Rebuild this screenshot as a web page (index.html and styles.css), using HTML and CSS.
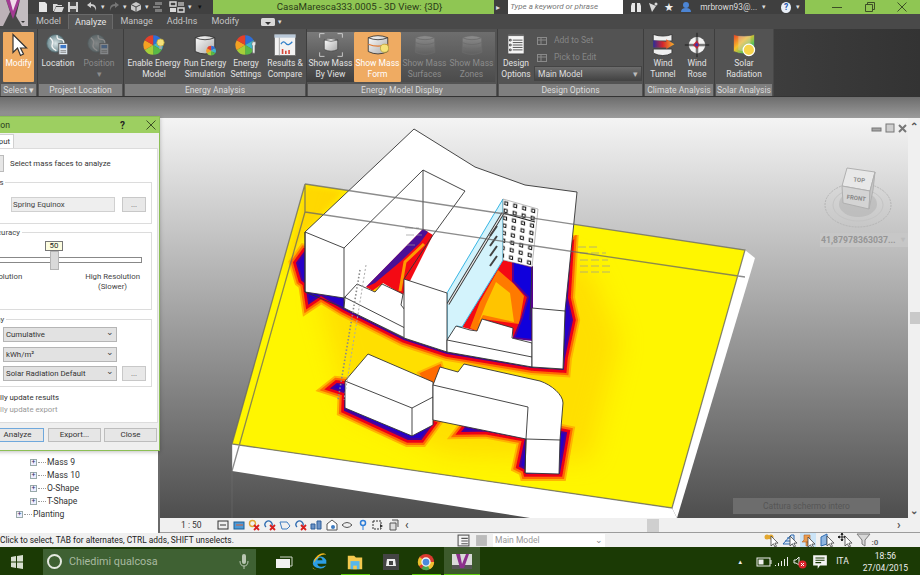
FILE: index.html
```html
<!DOCTYPE html>
<html lang="en">
<head>
<meta charset="utf-8">
<title>CasaMaresca333.0005 - 3D View: {3D}</title>
<link rel="stylesheet" href="styles.css">
</head>
<body>
<svg class="defs" width="0" height="0" aria-hidden="true">
  <defs>
    <linearGradient id="gMass" x1="0" y1="0" x2="1" y2="1"><stop offset="0" stop-color="#fff"/><stop offset="1" stop-color="#a9a9a9"/></linearGradient>
    <linearGradient id="gMassDim" x1="0" y1="0" x2="0" y2="1"><stop offset="0" stop-color="#8e8e8e"/><stop offset="1" stop-color="#5f5f5f"/></linearGradient>
    <linearGradient id="gSolar" x1="0" y1="0" x2="1" y2="1"><stop offset="0" stop-color="#e63a28"/><stop offset=".4" stop-color="#f6c12b"/><stop offset=".7" stop-color="#5cc25a"/><stop offset="1" stop-color="#2f6ed8"/></linearGradient>
    <linearGradient id="gTunnel" x1="0" y1="0" x2="1" y2="0"><stop offset="0" stop-color="#2b2b9a"/><stop offset=".45" stop-color="#d6262a"/><stop offset="1" stop-color="#f7b52c"/></linearGradient>
    <radialGradient id="gGlobe"><stop offset="0" stop-color="#d9e4e6"/><stop offset="1" stop-color="#6d8a90"/></radialGradient>
    <symbol id="pie" viewBox="0 0 32 32">
      <path d="M15 16V4A12 12 0 0 1 25.4 10Z" fill="#2f6ed8"/>
      <path d="M15 16L25.4 10A12 12 0 0 1 25.4 22Z" fill="#3fb6c9"/>
      <path d="M15 16L25.4 22A12 12 0 0 1 15 28Z" fill="#58b947"/>
      <path d="M15 16V28A12 12 0 0 1 4.6 22Z" fill="#a6cf3a"/>
      <path d="M15 16L4.6 22A12 12 0 0 1 4.6 10Z" fill="#f4a122"/>
      <path d="M15 16L4.6 10A12 12 0 0 1 15 4Z" fill="#e4402a"/>
    </symbol>
    <symbol id="mass" viewBox="0 0 32 32">
      <path d="M4 7Q16 2 28 7V24Q16 30 4 24Z" fill="url(#gMass)" stroke="#2c2c2c"/>
      <path d="M4 7Q16 12 28 7" fill="none" stroke="#2c2c2c"/>
    </symbol>
    <symbol id="massdim" viewBox="0 0 32 32">
      <path d="M4 7Q16 2 28 7V25Q16 30 4 25Z" fill="url(#gMassDim)" stroke="#6b6b6b"/>
      <path d="M4 7Q16 12 28 7M4 13Q16 18 28 13M4 19Q16 24 28 19" fill="none" stroke="#6b6b6b"/>
    </symbol>
    <symbol id="globe" viewBox="0 0 32 32">
      <circle cx="13" cy="14" r="11" fill="url(#gGlobe)" stroke="#4e5f63"/>
      <path d="M6 7Q11 11 9 15T14 23M15 4Q14 9 19 9T23 15" fill="none" stroke="#f4f4f4" stroke-width="1.6"/>
      <rect x="17" y="14" width="11" height="14" fill="#dfe7ee" stroke="#555"/>
      <rect x="19" y="16" width="7" height="4" fill="#3c78c8"/>
      <path d="M19 23h7M19 25h7" stroke="#777"/>
    </symbol>
    <symbol id="sm" viewBox="0 0 12 12">
      <rect x="1.5" y="2.5" width="9" height="7" fill="none" stroke="#8a8a8a"/>
      <path d="M1.5 5h9M5 2.500v7" stroke="#8a8a8a"/>
    </symbol>
    <symbol id="redx" viewBox="0 0 12 12">
      <circle cx="4.5" cy="4.5" r="3" fill="none" stroke="#e3a72f" stroke-width="1.4"/>
      <path d="M6 6l5 5M11 6l-5 5" stroke="#d81f1f" stroke-width="1.8"/>
    </symbol>
    <symbol id="bluex" viewBox="0 0 12 12">
      <path d="M2 8a3.5 3.5 0 1 1 5 0" fill="none" stroke="#2f6bb0" stroke-width="1.3"/>
      <path d="M6 6l5 5M11 6l-5 5" stroke="#d81f1f" stroke-width="1.8"/>
    </symbol>
    <symbol id="cur" viewBox="0 0 16 16">
      <path d="M8 4v10l2.4-2.2L12 15l1.5-.7-1.6-3.2H15Z" fill="#fff" stroke="#444" stroke-width=".8"/>
    </symbol>
    <clipPath id="plateClip"><polygon points="305,184 745,250 672,508 232,444"/></clipPath>
    <pattern id="facade" width="9" height="7.4" patternUnits="userSpaceOnUse" patternTransform="matrix(1 .27 -.08 1 503 199)">
      <rect width="9" height="7.4" fill="#fff"/>
      <rect x="2" y="2" width="3" height="3" fill="#fff" stroke="#111"/>
    </pattern>
    <filter id="blur" x="-20%" y="-20%" width="140%" height="140%"><feGaussianBlur stdDeviation="12"/></filter>
    <filter id="soft"><feGaussianBlur stdDeviation="3"/></filter>
    <filter id="edge" x="-5%" y="-5%" width="110%" height="110%"><feGaussianBlur stdDeviation=".6"/></filter>
    <polygon id="haloA" points="305,252 297,263 302,280 306,283 309,303 321,295 344,309 404,339 447,353 532,367 563,369 564,358 572,320 567,298 570,247 500,300"/>
    <polygon id="haloB" points="332,388 337,384 346,385 345,410 408,439 421,439 432,424 400,410"/>
    <polygon id="haloC" points="463,431 466,427 526,438 520,466 526,469 527,473 559,473 566,433 561,432 540,430"/>
    <polygon id="haloD" points="431,381 428,376 437,372 440,382"/>
  </defs>
</svg>

<header class="titlebar">
  <div class="qat">
    <div class="appbtn"><svg class="appicon" viewBox="0 0 28 26"><path d="M6 0L13 19 20 0Z" fill="#a33a93"/><path d="M10 0L13 11 17 0Z" fill="#f1dcea"/><path d="M0 0H6L10 12 3 26H0Z" fill="#bdb2b8"/><path d="M20 0H28V26H22L16 16Z" fill="#c3bcc0"/><path d="M21 21l4 0-2 2z" fill="#333"/></svg></div>
    <div class="qatitems">
      <svg class="qi" viewBox="0 0 12 12"><path d="M2 1h6l2 2v8H2Z" fill="#e6e6e6"/></svg>
      <svg class="qi" viewBox="0 0 12 12"><path d="M1 3h4l1 1h4v1H4L2 10H1ZM4 6h8l-2 5H2Z" fill="#d8d8d8"/></svg>
      <svg class="qi" viewBox="0 0 12 12"><path d="M1 1h10v10H1Z" fill="#d2d2d2"/><path d="M3 1h6v4H3ZM3 8h6v3H3Z" fill="#4d4d4d"/></svg>
      <svg class="qi mleft" viewBox="0 0 12 12"><path d="M5 1L1 4l4 3V5q4 0 5 5 1-7-5-7Z" fill="#cfcfcf"/></svg>
      <span class="caret">▾</span>
      <svg class="qi" viewBox="0 0 12 12"><path d="M7 1l4 3-4 3V5q-4 0-5 5-1-7 5-7Z" fill="#767676"/></svg>
      <span class="caret">▾</span>
      <svg class="qi" viewBox="0 0 12 12"><path d="M6 1l5 2.5v5L6 11 1 8.500v-5Z" fill="#c8c8c8"/><path d="M1 3.500L6 6l5-2.500M6 6v5" stroke="#444" fill="none"/></svg>
      <span class="caret">▾</span>
      <svg class="qi" viewBox="0 0 12 12"><path d="M3 1h7v3H3ZM1 5h7v2H1ZM3 8h7v3H3Z" fill="#7b7b7b"/></svg>
      <svg class="qi wide" viewBox="0 0 16 12"><path d="M1 1h6v4H1ZM9 7h6v4H9Z" fill="none" stroke="#d9d9d9" stroke-width="1.400"/><path d="M1 7h6v4H1Z" fill="#d9d9d9"/><path d="M9 1h6v4H9Z" fill="#9a9a9a"/></svg>
      <span class="caret">▾</span>
      <span class="caret dark">▾</span>
    </div>
  </div>
  <div class="doctitle">CasaMaresca333.0005 - 3D View: {3D}</div>
  <div class="infocenter">
    <span class="arrow">▸</span>
    <span class="search">Type a keyword or phrase</span>
    <svg class="qi" viewBox="0 0 12 12"><path d="M2 2h3v9H1V5ZM10 2H7v9h4V5Z" fill="#e6e6e6"/></svg>
    <svg class="qi" viewBox="0 0 12 12"><path d="M2 2l7 3-4 6Z" fill="#d8d8d8"/><circle cx="9" cy="3" r="1.500" fill="#d8d8d8"/></svg>
    <span class="star">★</span>
    <svg class="qi" viewBox="0 0 12 12"><circle cx="6" cy="4" r="3" fill="#4c85d4"/><path d="M1 11q0-4 5-4t5 4Z" fill="#4c85d4"/></svg>
    <span class="user">mrbrown93@...</span>
    <span class="caret">▾</span>
    <span class="help">?</span>
    <span class="caret">▾</span>
  </div>
  <div class="winctl">
    <svg class="wc" viewBox="0 0 10 10"><path d="M0 5.500h10" stroke="#3d4f26" fill="none"/></svg>
    <svg class="wc" viewBox="0 0 10 10"><path d="M.5 2.500h7v7h-7ZM2.500 2.500v-2h7v7h-2" stroke="#3d4f26" fill="none"/></svg>
    <svg class="wc" viewBox="0 0 10 10"><path d="M.5.500l9 9M9.500.500l-9 9" stroke="#3d4f26" fill="none"/></svg>
  </div>
</header>

<nav class="tabs">
  <span class="tab">Model</span>
  <span class="tab active">Analyze</span>
  <span class="tab">Manage</span>
  <span class="tab">Add-Ins</span>
  <span class="tab">Modify</span>
  <span class="tab tabicon"><svg class="tabcam" viewBox="0 0 14 8"><rect width="14" height="8" rx="1.500" fill="#d8d8d8"/><path d="M4 4h6l-3 3Z" fill="#333"/></svg><span class="caret">▾</span></span>
</nav>

<section class="ribbon">
  <div class="panel p-select">
    <div class="pbody"><div class="tool w-modify on">
      <div class="ic"><svg class="i24" viewBox="0 0 16 16"><path d="M4 1v12l3-3 2 5 2-1-2-4h4Z" fill="#fff" stroke="#333" stroke-width=".8"/></svg></div>
      <span>Modify</span></div></div>
    <div class="pfoot">Select ▾</div>
  </div>
  <div class="panel p-loc">
    <div class="pbody">
      <div class="tool w-40"><div class="ic"><svg class="i30" viewBox="0 0 32 32"><use href="#globe"/></svg></div><span>Location</span></div>
      <div class="tool w-42 off"><div class="ic"><svg class="i30 dim" viewBox="0 0 32 32"><use href="#globe"/></svg></div><span>Position<br>▾</span></div>
    </div>
    <div class="pfoot">Project Location</div>
  </div>
  <div class="panel p-energy">
    <div class="pbody">
      <div class="tool w-60"><div class="ic"><svg class="i30" viewBox="0 0 32 32"><use href="#pie"/><circle cx="24" cy="13" r="4.500" fill="#f6e27a" stroke="#b9a53a"/><rect x="22.500" y="17" width="3" height="4" fill="#aaa"/></svg></div><span>Enable Energy<br>Model</span></div>
      <div class="tool w-42"><div class="ic"><svg class="i30" viewBox="0 0 32 32"><use href="#mass"/><svg x="16" y="15" width="16" height="16" viewBox="0 0 32 32"><use href="#pie"/></svg></svg></div><span>Run Energy<br>Simulation</span></div>
      <div class="tool w-40"><div class="ic"><svg class="i30" viewBox="0 0 32 32"><use href="#pie"/><path d="M24 12l4 0v3l-1 2v9h-3v-9l-1-2Z" fill="#e8e8e8" stroke="#555" stroke-width=".6"/></svg></div><span>Energy<br>Settings</span></div>
      <div class="tool w-38"><div class="ic"><svg class="i30" viewBox="0 0 32 32"><rect x="3" y="3" width="26" height="26" fill="#f2f2f2" stroke="#666"/><rect x="3" y="3" width="26" height="4" fill="#b9c8d8"/><path d="M9 7v22" stroke="#999"/><path d="M11 15q3-5 6-1t8-2" fill="none" stroke="#2f7ec8" stroke-width="1.500"/><path d="M12 27v-6h2v6ZM16 27v-4h2v4ZM20 27v-5h2v5Z" fill="#d9483a"/></svg></div><span>Results &amp;<br>Compare</span></div>
    </div>
    <div class="pfoot">Energy Analysis</div>
  </div>
  <div class="panel p-display">
    <div class="pbody">
      <div class="tool w-47 grad"><div class="ic"><svg class="i30" viewBox="0 0 32 32"><path d="M2 7V2h6M30 7V2h-6M2 25v5h6M30 25v5h-6" fill="none" stroke="#ddd"/><use href="#mass" x="5" y="5" width="22" height="22"/></svg></div><span>Show Mass<br>By View</span></div>
      <div class="tool w-47 on"><div class="ic"><svg class="i30" viewBox="0 0 32 32"><use href="#mass"/><path d="M4 15Q16 20 28 15" fill="none" stroke="#e2792f" stroke-width="1.500"/><circle cx="24" cy="20" r="5" fill="#f6e27a" stroke="#b9a53a"/></svg></div><span>Show Mass<br>Form</span></div>
      <div class="tool w-47 grad off"><div class="ic"><svg class="i30" viewBox="0 0 32 32"><use href="#massdim"/></svg></div><span>Show Mass<br>Surfaces</span></div>
      <div class="tool w-47 grad off"><div class="ic"><svg class="i30" viewBox="0 0 32 32"><use href="#massdim"/></svg></div><span>Show Mass<br>Zones</span></div>
    </div>
    <div class="pfoot">Energy Model Display</div>
  </div>
  <div class="panel p-design">
    <div class="pbody">
      <div class="tool w-36"><div class="ic"><svg class="i30" viewBox="0 0 32 32"><rect x="6" y="3" width="20" height="24" fill="#f5f5f5" stroke="#444"/><rect x="6" y="3" width="20" height="2" fill="#6c6c6c"/><path d="M8 9h2v2H8ZM8 15h2v2H8ZM8 21h2v2H8Z" fill="none" stroke="#333"/><path d="M12 10h12M12 13h12M12 16h12M12 19h12M12 22h12" stroke="#333"/></svg></div><span>Design<br>Options</span></div>
      <div class="dstack">
        <div class="ditem"><svg class="i12" viewBox="0 0 12 12"><use href="#sm"/></svg><span>Add to Set</span></div>
        <div class="ditem"><svg class="i12" viewBox="0 0 12 12"><use href="#sm"/></svg><span>Pick to Edit</span></div>
        <div class="dselect"><span>Main Model</span><span class="dcaret">▾</span></div>
      </div>
    </div>
    <div class="pfoot">Design Options</div>
  </div>
  <div class="panel p-climate">
    <div class="pbody">
      <div class="tool w-38"><div class="ic"><svg class="i30" viewBox="0 0 32 32"><path d="M4 3Q16 7 27 3V11H4ZM4 21H27V26Q16 32 4 26Z" fill="#efefef" stroke="#333"/><path d="M4 10L20 12V9L30 15 20 21V19L4 19Z" fill="url(#gTunnel)"/></svg></div><span>Wind<br>Tunnel</span></div>
      <div class="tool w-30"><div class="ic"><svg class="i30" viewBox="0 0 32 32"><circle cx="16" cy="16" r="10" fill="#f4f4f4"/><path d="M6 16h20M16 6v20" stroke="#bdbdbd" stroke-width="4"/><path d="M16 1v30M1 16h30" stroke="#111"/><path d="M16 10l3 6-3 5-5-5Z" fill="#c72634"/><path d="M16 13l2 3-2 2-3-2Z" fill="#4232a8"/></svg></div><span>Wind<br>Rose</span></div>
    </div>
    <div class="pfoot">Climate Analysis</div>
  </div>
  <div class="panel p-solar">
    <div class="pbody">
      <div class="tool w-58"><div class="ic"><svg class="i30" viewBox="0 0 32 32"><path d="M3 3Q16 7 29 3V24Q16 30 3 24Z" fill="url(#gSolar)" stroke="#555"/><path d="M9 5V22Q16 25 24 22V5" fill="#d9d9d9" opacity=".35"/><circle cx="22" cy="22" r="7" fill="#f7d54a" stroke="#fff" stroke-width="1.500"/></svg></div><span>Solar<br>Radiation</span></div>
    </div>
    <div class="pfoot">Solar Analysis</div>
  </div>
</section>

<div class="band"></div>

<main class="workspace">
  <aside class="browser">
    <ul class="tree">
      <li class="node l2"><span class="plus">+</span><span class="dash"></span>Mass 9</li>
      <li class="node l2"><span class="plus">+</span><span class="dash"></span>Mass 10</li>
      <li class="node l2"><span class="plus">+</span><span class="dash"></span>O-Shape</li>
      <li class="node l2"><span class="plus">+</span><span class="dash"></span>T-Shape</li>
      <li class="node l1"><span class="plus">+</span><span class="dash"></span>Planting</li>
    </ul>
  </aside>
  <div class="viewcol">
    <div class="viewrow">
      <div class="canvas">
        <svg class="scene" viewBox="160 118 748 400" width="748" height="400" role="img" aria-label="3D model with solar radiation analysis">
          <polygon class="side" points="232,444 672,508 677,518 530,518 232,471"/>
          <polygon class="side" points="745,250 672,508 677,518 755,258"/>
          <polygon class="plate" points="305,184 745,250 672,508 232,444"/>
          <g clip-path="url(#plateClip)">
            <polygon class="glow" points="345,195 430,200 590,270 620,340 590,460 450,455 350,410 320,300"/>
            <polygon class="glowedge" points="305,184 345,190 305,235 282,280 298,215"/>
          </g>
          <g class="halo">
            <use href="#haloA" class="h1"/><use href="#haloA" class="h2"/><use href="#haloA" class="h3"/><use href="#haloA" class="h4"/>
            <use href="#haloB" class="h1"/><use href="#haloB" class="h2"/><use href="#haloB" class="h3"/><use href="#haloB" class="h4"/>
            <use href="#haloC" class="h1"/><use href="#haloC" class="h2"/><use href="#haloC" class="h3"/><use href="#haloC" class="h4"/>
            <use href="#haloD" class="h1"/><use href="#haloD" class="h2"/>
          </g>

          <polygon class="mass" points="305,232 414,129 475,167 525,185 577,192 565,311 563,369 532,367 447,352 404,338 344,308 344,298 305,292"/>
          <polygon class="court-red" points="423,229 433,235 403,295 383,283 375,292 366,287"/>
          <polygon class="court-purple" points="423,229 428,232 420,243 400,262 375,283 366,287"/>
          <polyline class="court-stripe" points="424,244 405,262 400,291"/>
          <polygon class="court-gold" points="372,291 379,286 383,283 376,294"/>

          <polygon class="court-red" points="503,260 532,267 532,340 513,338 512,328 482,319 477,331 462,327"/>
          <polygon class="court-orange" points="498,270 514,284 524,296 519,324 482,319 477,331 470,328 480,302"/>
          <polygon class="court-gold" points="496,282 510,293 514,322 483,315 478,324 486,304"/>
          <polygon class="court-blue" points="513,261 532,267 532,340 514,338 522,318 528,297 513,281"/>

          <polygon class="wall" points="447,293 503,199 503,260 462,327 457,326 447,340"/>
          <polygon class="grid" points="503,199 538,209 532,267 503,260"/>
          <path class="fline" d="M503,213 535,222"/>
          <polyline class="rail" points="448,304 503,213"/>
          <polyline class="railin" points="448,304 503,213"/>
          <path class="balc" d="M497,226l-7 10M497,236l-7 10M497,246l-7 10M497,256l-7 10"/>

          <polygon class="mass" points="345,297 357,284 375,292 382,284 403,294 401,305 405,310 405,338 344,308"/>
          <path class="edge" d="M344,297 405,328"/>
          <polygon class="mass" points="404,279 447,293 447,352 404,338"/>
          <polygon class="mass" points="447,340 456,326 470,330 477,331 482,319 513,328 512,338 532,343 532,367 447,352"/>
          <path class="edge" d="M447,340 532,357"/>
          <polygon class="mass" points="532,308 565,311 563,369 532,367"/>
          <path class="edge" d="M305,232 344,248 V298 M344,248 423,170 465,191 433,235 404,279 M423,170 V229 M532,267 530,320 M305,232 V292 L344,308"/>

          <polygon class="mass" points="345,381 368,354 433,382 433,425 412,436 345,408"/>
          <path class="edge" d="M345,381 412,408 V436 M412,408 433,397"/>
          <path class="mass" d="M433,385 440,367 458,372 464,364 540,381C552,385 563,395 563,403L560,440 559,474 525,473 526,439 433,420Z"/>
          <path class="edge" d="M433,385 528,407 526,439 560,440 M526,439 525,473"/>

          <path class="tick" d="M360,270 338,400"/>
          <path class="tickb" d="M366,265 344,400"/>
          <path class="marks" d="M578,247h22M580,253h26M580,260h28M580,266h30M580,272h30M405,228h14M406,235h16M407,245h8"/>
          <path class="wire" d="M305,184 745,250 672,508 232,444 305,184 M305,212 745,277 M305,212 232,471 M305,184 V212"/>
          <path class="wireb" d="M232,444 V471 530,518"/>

          <g class="cube">
            <ellipse cx="858" cy="205" rx="33" ry="22" fill="none" stroke="#b5b5b5" stroke-dasharray="2 1"/>
            <ellipse cx="858" cy="205" rx="25" ry="16" fill="none" stroke="#c4c4c4"/>
            <ellipse cx="858" cy="204" rx="19" ry="13" fill="#b0b0b0" opacity=".5"/>
            <polygon points="847,168 875,172 870,191 842,186" fill="#e8e8e8" stroke="#b0b0b0"/>
            <polygon points="842,186 870,191 869,209 843,203" fill="#d4d4d4" stroke="#b0b0b0"/>
            <polygon points="875,172 870,191 869,209 873,190" fill="#c6c6c6" stroke="#b0b0b0"/>
            <text x="859" y="182" class="cubet" transform="rotate(6 859 182)">TOP</text>
            <text x="856" y="200" class="cubet" transform="rotate(8 856 200)">FRONT</text>
          </g>
          <g class="winicons">
            <rect x="872" y="128" width="9" height="3" fill="#a5a5a5" stroke="#777"/>
            <rect x="886" y="124" width="8" height="8" fill="#cfcfcf" stroke="#777"/>
            <path d="M899 125l7 7M906 125l-7 7" stroke="#777" stroke-width="2"/>
          </g>
        </svg>
        <div class="chip"><span>41,87978363037...</span><span class="chipcaret">▾</span></div>
        <div class="toast">Cattura schermo intero</div>
      </div>
      <div class="vscroll">
        <span class="sarrow">⌃</span>
        <div class="vthumb"></div>
        <span class="sarrow down">⌄</span>
      </div>
    </div>
    <div class="viewbar">
      <span class="scale">1 : 50</span>
      <div class="vbicons">
        <svg class="i12" viewBox="0 0 12 12"><rect x="1" y="2" width="10" height="8" fill="#eee" stroke="#333"/><path d="M3 6h6" stroke="#333"/></svg>
        <svg class="i12" viewBox="0 0 12 12"><rect x="1" y="3" width="10" height="7" fill="#4d9ad6" stroke="#1e5e94"/><path d="M3 6h7" stroke="#e35d2f"/></svg>
        <svg class="i12" viewBox="0 0 12 12"><use href="#redx"/></svg>
        <svg class="i12" viewBox="0 0 12 12"><use href="#bluex"/></svg>
        <svg class="i12" viewBox="0 0 12 12"><path d="M1 3h7l3 4-3 3H3Z" fill="none" stroke="#3f7cc0"/></svg>
        <svg class="i12" viewBox="0 0 12 12"><use href="#bluex"/></svg>
        <svg class="i12" viewBox="0 0 12 12"><path d="M1 10V5h4v5ZM7 10V2h4v8Z" fill="#6d93c6" stroke="#2f5f9a"/></svg>
        <svg class="i12" viewBox="0 0 12 12"><path d="M6 1l5 4v6H1V5Z" fill="#fff" stroke="#555"/><circle cx="7" cy="8" r="2" fill="#3f7cc0"/></svg>
        <svg class="i12" viewBox="0 0 12 12"><path d="M1 6q5-5 10 0-5 5-10 0Z" fill="none" stroke="#555"/></svg>
        <svg class="i12" viewBox="0 0 12 12"><circle cx="6" cy="4" r="2.500" fill="none" stroke="#2f7ed8" stroke-width="1.500"/><path d="M6 7v4" stroke="#2f7ed8"/></svg>
        <svg class="i12" viewBox="0 0 12 12"><rect x="1" y="2" width="8" height="8" fill="none" stroke="#333" stroke-dasharray="2 1"/><path d="M8 5l3 2-3 2Z" fill="#333"/></svg>
        <svg class="i12" viewBox="0 0 12 12"><path d="M2 4h6v7H2ZM4 1h6v7" fill="#ddd" stroke="#555"/></svg>
        <span class="chev">‹</span>
      </div>
      <div class="hscroll"><div class="hthumb"></div></div>
      <span class="chevr">›</span>
      <span class="grip"></span>
    </div>
  </div>
</main>

<footer class="statusbar">
  <span class="stext">Click to select, TAB for alternates, CTRL adds, SHIFT unselects.</span>
  <div class="sleft">
    <svg class="i13" viewBox="0 0 12 12"><rect x="1" y="1" width="10" height="10" fill="#f5f5f5" stroke="#555"/><path d="M4 4h6M4 6.500h6M4 9h6" stroke="#555"/></svg>
    <svg class="i13" viewBox="0 0 12 12"><rect x="1" y="1" width="10" height="10" fill="#bbb"/></svg>
    <div class="sselect"><span>Main Model</span><span class="scaret">⌄</span></div>
  </div>
  <div class="sright">
    <svg class="i16" viewBox="0 0 16 16"><circle cx="4" cy="5" r="2.500" fill="#e3a72f"/><circle cx="8" cy="5" r="2.500" fill="#e3a72f"/><use href="#cur"/></svg>
    <svg class="i16" viewBox="0 0 16 16"><path d="M1 12L9 3h3v9Z" fill="#d8e6f5" stroke="#2f6bb0"/><path d="M3 9h6M5 6h5" stroke="#2f6bb0"/><use href="#cur"/></svg>
    <span class="pinbox"><svg class="i16" viewBox="0 0 16 16"><path d="M4 2h6v5l2 2H2l2-2ZM6 9h2v4H6Z" fill="#ea9a4d" stroke="#b2652a" stroke-width=".6"/><use href="#cur"/></svg></span>
    <svg class="i16" viewBox="0 0 16 16"><path d="M2 5l6-3v10l-6 2Z" fill="#8fb7e2" stroke="#2f6bb0"/><use href="#cur"/></svg>
    <svg class="i16" viewBox="0 0 16 16"><path d="M1 5h8M5 1v8M5 1L4 2.500h2ZM1 5l1.500-1v2ZM9 5L7.500 4v2ZM5 9L4 7.500h2Z" stroke="#222" fill="#222"/><use href="#cur"/></svg>
    <span class="filter"><svg class="i16" viewBox="0 0 16 16"><path d="M1 2h13L9 8v6l-3-2V8Z" fill="#d8d8d8" stroke="#7b7b7b"/></svg><b>:0</b></span>
  </div>
</footer>

<div class="taskbar">
  <svg class="winlogo" viewBox="0 0 12 14"><path d="M0 2l5-1v5.500H0ZM6 1l6-1v6.500H6ZM0 7.500h5V13l-5-1ZM6 7.500h6V14l-6-1Z" fill="#d7dfd0"/></svg>
  <div class="cortana">
    <span class="ring"></span>
    <span class="ask">Chiedimi qualcosa</span>
    <svg class="mic" viewBox="0 0 10 16"><rect x="3" y="0" width="4" height="10" rx="2" fill="#b9c6b2"/><path d="M1 7q0 5 4 5t4-5M5 12v3" fill="none" stroke="#b9c6b2"/></svg>
  </div>
  <div class="apps">
    <span class="app first"><svg class="i18" viewBox="0 0 18 18"><path d="M5 4h12v9h-2" fill="none" stroke="#cfd6c8"/><rect x="1" y="6" width="14" height="9" fill="#f2f2f2"/></svg></span>
    <span class="app"><svg class="i20" viewBox="0 0 20 20"><path d="M2 12a8 8 0 0 1 15-4v4H7q1 4 6 3l4-1q-3 4-8 3-6-1-7-5ZM7 8h6q-1-3-3-3T7 8Z" fill="#2d9fe5"/><path d="M17 2q-7-2-14 9 1-7 7-10 5-2 7 1ZM2 16q2 3 6 2-4 1-6-1Z" fill="#f5b920"/></svg></span>
    <span class="app lit"><svg class="i20" viewBox="0 0 20 20"><path d="M2 3h7l2 2h7v13H2Z" fill="#f3c94e"/><path d="M5 9h10v9H5Z" fill="#57b7ea"/><path d="M8 14h4v4H8Z" fill="#f3c94e"/></svg></span>
    <span class="app"><span class="store"><svg class="i10" viewBox="0 0 10 10"><path d="M1 2h8l1 7H0Z" fill="#eee"/><path d="M3 4h4v4H3Z" fill="#444"/></svg></span></span>
    <span class="app lit"><svg class="i20" viewBox="0 0 20 20"><circle cx="10" cy="10" r="9" fill="#d93a30"/><path d="M10 10L2.200 14.500A9 9 0 0 1 3 4.400Z" fill="#e8c12a"/><path d="M10 10L17.800 14.500A9 9 0 0 1 5 17.500Z" fill="#48a84d"/><path d="M10 10H19A9 9 0 0 1 14 18Z" fill="#f3c02f"/><circle cx="10" cy="10" r="4.500" fill="#4a89dc" stroke="#f4f4f4" stroke-width="1.500"/></svg></span>
    <span class="app active"><svg class="i22" viewBox="0 0 22 20"><path d="M1 2h20v15H1Z" fill="#d9d9d9"/><path d="M1 13h20v4H1Z" fill="#555"/><path d="M5 2h4l2 10 4-10h3l-5 14h-4Z" fill="#8d2f8d"/></svg></span>
  </div>
  <div class="tray">
    <span class="traytri">▲</span>
    <svg class="i16 bat" viewBox="0 0 16 10"><rect x="1" y="1" width="13" height="8" fill="none" stroke="#eee"/><rect x="2.500" y="2.500" width="5" height="5" fill="#eee"/><path d="M15 3v4" stroke="#eee"/></svg>
    <svg class="i14" viewBox="0 0 14 10"><path d="M1 9h1V8H1ZM4 9h1V6H4ZM7 9h1V4H7ZM10 9h1V2h-1ZM13 9h1V0h-1Z" fill="#eee"/></svg>
    <svg class="i14" viewBox="0 0 14 14"><path d="M1 5h2l3-3v8L3 8H1Z" fill="none" stroke="#eee"/><circle cx="9.500" cy="9.500" r="4" fill="#d8232a"/><path d="M8 8l3 3M11 8l-3 3" stroke="#fff"/></svg>
    <svg class="i16" viewBox="0 0 14 14"><path d="M1 1h12v9H7l-2 3v-3H1Z" fill="#f4f4f4"/><path d="M3 3.500h8M3 5.500h8M3 7.500h5" stroke="#1b3a04"/></svg>
    <span class="lang">ITA</span>
    <span class="clock"><span>18:56</span><span>27/04/2015</span></span>
  </div>
</div>

<div class="dialog">
  <div class="dtitle"><span>Solar Radiation</span><div class="dtbtns"><b>?</b><svg class="dx" viewBox="0 0 10 10"><path d="M.5.500l9 9M9.500.500l-9 9" stroke="#3d4f26" fill="none"/></svg></div></div>
  <div class="dtabs"><span class="dtab">Input</span></div>
  <div class="dpanel">
    <div class="dpick"><button class="pickbtn" type="button"></button><span>Select mass faces to analyze</span></div>
    <fieldset class="group g1"><legend>Settings</legend>
      <div class="grow"><span class="field">Spring Equinox</span><button class="more" type="button">...</button></div>
    </fieldset>
    <fieldset class="group g2"><legend>Calculation Accuracy</legend>
      <div class="slider"><span class="sbubble">50</span><span class="strack"></span><span class="sthumb"></span></div>
      <div class="slabels"><span>Low Resolution</span><span class="hi">High Resolution<br>(Slower)</span></div>
    </fieldset>
    <fieldset class="group g3"><legend>Display</legend>
      <div class="grow"><span class="combo">Cumulative<i>⌄</i></span></div>
      <div class="grow"><span class="combo">kWh/m²<i>⌄</i></span></div>
      <div class="grow"><span class="combo">Solar Radiation Default<i>⌄</i></span><button class="more" type="button">...</button></div>
    </fieldset>
    <div class="opt">Automatically update results</div>
    <div class="opt dis">Automatically update export</div>
  </div>
  <div class="dfoot">
    <button class="dbtn prime" type="button">Analyze</button>
    <button class="dbtn" type="button">Export...</button>
    <button class="dbtn" type="button">Close</button>
  </div>
</div>
</body>
</html>
```

FILE: styles.css
```css
* { box-sizing: border-box; }
html, body { margin: 0; padding: 0; }
body {
  position: relative;
  width: 920px;
  height: 575px;
  overflow: hidden;
  display: flex;
  flex-direction: column;
  font: 8.500px/11px Roboto, "Noto Sans", sans-serif;
  background: #a0a0a0;
  color: #222;
}
.defs { display: block; flex: none; }

/* title bar */
.titlebar { flex: none; height: 14px; display: flex; background: #8fc653; }
.qat { width: 213px; flex: none; background: #404040; display: flex; position: relative; }
.appbtn { width: 28px; height: 26px; flex: none; position: relative; z-index: 2; }
.appicon { display: block; width: 28px; height: 26px; }
.qatitems { display: flex; align-items: center; gap: 3px; padding-left: 9px; }
.qi { width: 12px; height: 12px; flex: none; }
.qi.wide { width: 16px; margin-left: 2px; }
.qi.mleft { margin-left: 4px; }
.caret { color: #ddd; font-size: 7px; line-height: 12px; }
.caret.dark { color: #111; margin-left: 3px; }
.doctitle { width: 281px; flex: none; color: #2a3a18; font-size: 9.700px; line-height: 14px; text-align: center; padding-left: 12px; white-space: nowrap; }
.infocenter { width: 311px; flex: none; background: #3f3f3f; display: flex; align-items: center; gap: 5px; padding: 0 5px 0 2px; color: #ddd; white-space: nowrap; }
.arrow { font-size: 8px; width: 8px; }
.search { width: 128px; height: 14px; background: #fff; color: #777; font-style: italic; font-size: 8px; line-height: 14px; padding-left: 2px; margin-right: 2px; }
.star { font-size: 11px; color: #eee; width: 12px; }
.user { margin-left: 3px; font-size: 8.400px; width: 58px; }
.help { width: 11px; height: 11px; border-radius: 50%; background: #eaf0f8; color: #2457b0; font-weight: 700; text-align: center; line-height: 11px; margin-left: 10px; }
.winctl { flex: 1; min-width: 0; display: flex; align-items: center; justify-content: space-between; padding: 0 13px 0 27px; }
.wc { width: 10px; height: 10px; }

/* tabs */
.tabs { flex: none; height: 15px; background: #494949; display: flex; padding-left: 29px; align-items: flex-end; }
.tab { color: #c4c4c4; height: 15px; padding: 0 7px; line-height: 15px; font-size: 9px; }
.tab.active { background: #555; color: #e4e4e4; border: 1px solid #6a6a6a; border-bottom: 0; padding: 0 6px; line-height: 14px; }
.tabicon { display: flex; align-items: center; gap: 3px; margin-left: 8px; }
.tabcam { width: 14px; height: 8px; }

/* ribbon */
.ribbon { flex: none; height: 68px; background: linear-gradient(90deg, #535353 0, #535353 773px, #3d3d3d 774px, #333 100%); display: flex; border-bottom: 1px solid #333; }
.panel { display: flex; flex-direction: column; border-right: 1px solid #3e3e3e; }
.pbody { flex: 1; display: flex; padding-top: 3px; }
.pfoot { height: 12px; background: #7f7f7f; color: #dcdcdc; text-align: center; font-size: 8.600px; line-height: 12px; margin: 0 1px; white-space: nowrap; }
.p-select { width: 38px; }
.p-select .pbody { padding-left: 3px; }
.p-loc { width: 86px; }
.p-energy { width: 183px; }
.p-display { width: 191px; }
.p-design { width: 146px; }
.p-climate { width: 71px; }
.p-solar { width: 58px; border-right: 0; }
.tool { display: flex; flex-direction: column; align-items: center; color: #e2e2e2; text-align: center; font-size: 8.500px; line-height: 11px; white-space: nowrap; height: 50px; }
.tool .ic { height: 26px; display: flex; align-items: center; justify-content: center; flex: none; }
.tool.on { background: #efab62; color: #fff; border-radius: 1px; }
.tool.grad { background: linear-gradient(#7a7a7a, #3e3e3e); }
.tool.off { color: #8b8b8b; }
.tool.grad.off { background: linear-gradient(#6e6e6e, #4b4b4b); }
.w-modify { width: 31px; }
.w-30 { width: 30px; }
.w-36 { width: 36px; }
.w-38 { width: 38px; }
.w-40 { width: 40px; }
.w-42 { width: 42px; }
.w-47 { width: 47px; }
.w-58 { width: 58px; }
.w-60 { width: 60px; }
.i30 { width: 26px; height: 26px; }
.i24 { width: 24px; height: 24px; }
.i12 { width: 12px; height: 12px; flex: none; display: block; }
.i13 { width: 13px; height: 13px; flex: none; }
.i14 { width: 14px; height: 14px; flex: none; }
.i16 { width: 16px; height: 16px; flex: none; }
.i18 { width: 18px; height: 18px; }
.i20 { width: 18px; height: 18px; }
.i22 { width: 22px; height: 20px; }
.i10 { width: 10px; height: 10px; }
.dim { opacity: .35; }
.dstack { display: flex; flex-direction: column; width: 108px; }
.ditem { display: flex; align-items: center; gap: 6px; height: 17px; color: #868686; padding-left: 2px; }
.dselect { display: flex; justify-content: space-between; height: 15px; padding: 0 3px; background: linear-gradient(#6c6c6c, #444); color: #ddd; line-height: 14px; border: 1px solid #444; }
.dcaret { color: #bbb; }

.band { flex: none; height: 21px; background: linear-gradient(#6d6d6d, #9b9b9b); }

/* workspace */
.workspace { flex: none; height: 415px; display: flex; }
.browser { width: 160px; background: #fff; display: flex; flex-direction: column; justify-content: flex-end; padding-bottom: 12px; border-right: 2px solid #6a6a6a; }
.tree { list-style: none; margin: 0; padding: 0; }
.node { display: flex; align-items: center; height: 13px; font-size: 8.600px; color: #333; }
.l2 { padding-left: 30px; }
.l1 { padding-left: 16px; }
.plus { width: 7px; height: 7px; border: 1px solid #9aa; color: #336; background: #eef; font-size: 7px; line-height: 5px; text-align: center; }
.dash { width: 8px; border-top: 1px dotted #999; margin: 0 1px; }
.viewcol { flex: 1; display: flex; flex-direction: column; min-width: 0; }
.viewrow { flex: 1; display: flex; height: 400px; }
.canvas { position: relative; width: 748px; height: 400px; background: linear-gradient(#f4f4f4, #4e4e4e); overflow: hidden; }
.scene { display: block; }
.vscroll { flex: 1; background: #f0f0f0; position: relative; display: flex; flex-direction: column; align-items: center; color: #555; }
.sarrow { position: absolute; top: 4px; left: 2px; font-size: 10px; line-height: 10px; font-weight: 700; }
.sarrow.down { top: auto; bottom: 2px; }
.vthumb { position: absolute; top: 194px; left: 2px; right: 0; height: 12px; background: #c9c9c9; }
.viewbar { flex: none; height: 15px; background: #f0f0f0; display: flex; align-items: center; border-bottom: 1px solid #9c9c9c; }
.scale { width: 57px; padding-left: 21px; color: #333; font-size: 8.500px; }
.vbicons { display: flex; align-items: center; gap: 3.500px; width: 200px; }
.chev { font-size: 12px; line-height: 12px; color: #333; margin-left: 2px; }
.hscroll { flex: 1; height: 13px; position: relative; }
.hthumb { position: absolute; left: 230px; top: 0; width: 12px; height: 13px; background: #cfcfcf; }
.chevr { width: 11px; font-weight: 700; font-size: 12px; color: #555; }
.grip { width: 12px; }

.chip { position: absolute; left: 660px; top: 115px; width: 88px; height: 14px; background: rgba(200,200,200,.75); color: #959595; font-weight: 700; line-height: 14px; padding: 0 3px 0 1px; display: flex; justify-content: space-between; font-size: 8.700px; white-space: nowrap; }
.chipcaret { font-size: 8px; color: #bbb; }
.toast { position: absolute; left: 573px; top: 380px; width: 147px; height: 16px; background: #6d6d6d; color: #565656; text-align: center; line-height: 16px; font-size: 8.500px; }

/* scene */
.plate { fill: #fff600; }
.side { fill: #fff; }
.glow { fill: #ffcc00; filter: url(#blur); opacity: .55; }
.glowedge { fill: #ffb300; filter: url(#soft); opacity: .45; }
.halo { filter: url(#edge); }
.h1 { fill: none; stroke: #ffb400; stroke-width: 16px; }
.h2 { fill: none; stroke: #ff6a00; stroke-width: 12px; }
.h3 { fill: none; stroke: #ee0018; stroke-width: 7.500px; }
.h4 { fill: #2600c8; stroke: #4c0098; stroke-width: 2px; }
.mass { fill: #fff; stroke: #333; stroke-width: .9px; stroke-linejoin: round; }
.edge { fill: none; stroke: #333; stroke-width: .9px; }
.court-red { fill: #f40a14; }
.court-purple { fill: #4a1096; }
.court-orange { fill: #ff7a00; }
.court-gold { fill: #ffc400; }
.court-stripe { fill: none; stroke: #ff9a00; stroke-width: 3px; }
.court-blue { fill: #1000dc; stroke: #5a0090; stroke-width: 2px; }
.wall { fill: #d3f3fc; stroke: #39b6e4; stroke-width: 1px; }
.grid { fill: url(#facade); stroke: #777; stroke-width: .5px; }
.fline { fill: none; stroke: #222; stroke-width: 1.200px; }
.rail { fill: none; stroke: #333; stroke-width: 3px; }
.railin { fill: none; stroke: #eee; stroke-width: 1.200px; }
.balc { fill: none; stroke: #444; stroke-width: 2px; }
.tick { fill: none; stroke: #888; stroke-width: 1.600px; stroke-dasharray: 1.500 2; }
.tickb { fill: none; stroke: #aaa; stroke-width: 1px; stroke-dasharray: 2 2; }
.marks { fill: none; stroke: #999; stroke-width: .7px; stroke-dasharray: 8 3; }
.wire { fill: none; stroke: #666; stroke-width: 1.300px; opacity: .75; }
.wireb { fill: none; stroke: #777; stroke-width: .8px; opacity: .5; }
.cubet { font: 700 6px Roboto, sans-serif; fill: #888; text-anchor: middle; }

/* status */
.statusbar { flex: none; height: 14px; background: #f0f0f0; display: flex; align-items: center; color: #222; white-space: nowrap; }
.stext { width: 457px; font-size: 8.400px; }
.sleft { display: flex; align-items: center; gap: 5px; width: 306px; }
.sselect { width: 112px; height: 13px; background: #fff; color: #999; display: flex; justify-content: space-between; padding: 0 2px; line-height: 13px; font-size: 8.500px; }
.scaret { color: #888; }
.sright { display: flex; align-items: center; gap: 2.500px; }
.pinbox { background: #cbe4f7; height: 14px; display: flex; }
.filter { display: flex; align-items: flex-end; color: #666; font-size: 8px; line-height: 10px; }

/* taskbar */
.taskbar { flex: none; height: 29px; background: #1b3a05; display: flex; align-items: center; color: #eee; }
.winlogo { width: 12px; height: 14px; margin: 0 20px 0 11px; flex: none; }
.cortana { width: 213px; height: 26px; background: #3f6133; display: flex; align-items: center; padding: 0 7px 0 4px; }
.ring { width: 15px; height: 15px; border: 2px solid #e4e9e0; border-radius: 50%; flex: none; }
.ask { flex: 1; padding-left: 7px; color: #a9baa0; font-size: 10.800px; }
.mic { width: 10px; height: 16px; }
.apps { display: flex; height: 29px; margin-left: 9px; }
.app { width: 35.500px; height: 29px; display: flex; align-items: center; justify-content: center; }
.app.first { width: 37px; }
.app.lit { background: linear-gradient(#5bc90a, #5bc90a) center bottom / 29px 2px no-repeat; }
.app.active { box-shadow: inset 0 -2px 0 #5bc90a; background: #3d5a2c; }
.store { width: 16px; height: 16px; background: #444; display: flex; align-items: center; justify-content: center; }
.tray { margin-left: auto; display: flex; align-items: center; gap: 5px; padding-right: 12px; }
.traytri { font-size: 6px; margin-right: 8px; }
.bat { margin-right: -3px; }
.lang { font-size: 8.600px; margin: 0 9px 0 3px; }
.clock { display: flex; flex-direction: column; align-items: center; font-size: 8.500px; line-height: 12px; }

/* dialog */
.dialog { position: absolute; left: -200px; top: 116px; width: 360px; height: 335px; background: #efefef; border: 1px solid #8cbf55; display: flex; flex-direction: column; box-shadow: 0 1px 4px rgba(0,0,0,.25); font-size: 7.800px; color: #333; }
.dtitle { height: 16px; flex: none; background: #9dcf61; display: flex; justify-content: space-between; align-items: center; padding-left: 151px; color: #2c3a1c; font-size: 8.600px; white-space: nowrap; }
.dtbtns { display: flex; align-items: center; gap: 21px; padding-right: 3px; }
.dtbtns b { font-size: 10px; color: #222; }
.dx { width: 10px; height: 10px; }
.dtabs { height: 15px; flex: none; padding-left: 177px; display: flex; align-items: flex-end; }
.dtab { background: #fff; border: 1px solid #d0d0d0; border-bottom: 0; width: 36px; height: 14px; line-height: 13px; text-align: right; padding-right: 3px; }
.dpanel { width: 357px; height: 275px; background: #fff; border: 1px solid #dcdcdc; padding: 6px 5px 0 198px; flex: none; }
.dpick { display: flex; align-items: center; gap: 6px; height: 17px; margin-left: -11px; }
.pickbtn { width: 15px; height: 17px; border: 1px solid #bbb; background: #e6e6e6; padding: 0; flex: none; }
.dpick span { white-space: nowrap; }
.group { border: 1px solid #dcdcdc; margin: 0 0 0 -50px; padding: 0 0 0 50px; min-width: 0; }
.group legend { padding: 0 2px; color: #444; line-height: 9px; white-space: nowrap; }
.g1 { height: 46px; margin-top: 6px; }
.g1 legend { margin-left: -28px; }
.g1 .grow { margin-top: 10px; }
.g2 { height: 82px; margin-top: 4px; }
.g2 legend { margin-left: -56px; }
.g3 { height: 72px; margin-top: 5px; padding-top: 3px; }
.g3 legend { margin-left: -24px; }
.grow { display: flex; align-items: center; gap: 5px; margin-bottom: 4.500px; }
.field { width: 104px; height: 15px; background: #eee; border: 1px solid #d0d0d0; line-height: 13px; padding-left: 1px; margin: 0 2px 0 10px; color: #444; white-space: nowrap; }
.more { width: 24px; height: 15px; background: #e8e8e8; border: 1px solid #c8c8c8; padding: 0; font-size: 7px; line-height: 8px; color: #555; flex: none; }
.combo { position: relative; flex: none; width: 114px; height: 15px; background: #e2e2e2; border: 1px solid #b5b5b5; line-height: 13px; padding-left: 2px; margin-left: 2px; color: #333; white-space: nowrap; }
.combo i { position: absolute; right: 2px; top: -2px; font-style: normal; font-size: 9px; color: #444; }
.slider { position: relative; height: 29px; margin-top: 4px; }
.sbubble { position: absolute; left: 44px; top: 0; width: 18px; height: 10px; background: #fdfde0; border: 1px solid #777; text-align: center; line-height: 8px; color: #222; }
.strack { position: absolute; left: -50px; right: 9px; top: 16px; height: 6px; background: #fff; border: 1px solid #888; }
.sthumb { position: absolute; left: 49px; top: 10px; width: 9px; height: 19px; background: #d9d9d9; border: 1px solid #b4b4b4; }
.slabels { display: flex; justify-content: space-between; align-items: flex-start; margin: 2px 0 0 -32px; padding-right: 11px; line-height: 10px; color: #444; }
.hi { text-align: center; }
.opt { margin: 5px 0 0 -40px; white-space: nowrap; height: 12px; line-height: 12px; color: #333; }
.opt.dis { color: #999; margin-top: 0; }
.dfoot { flex: 1; display: flex; justify-content: flex-end; gap: 3px; padding: 5px 2px 0 0; }
.dbtn { width: 53px; height: 14px; background: #e6e6e6; border: 1px solid #bdbdbd; padding: 0; font: 8px/12px Roboto, sans-serif; color: #333; }
.dbtn.prime { border-color: #6fa8dc; margin-right: 1px; }
```
